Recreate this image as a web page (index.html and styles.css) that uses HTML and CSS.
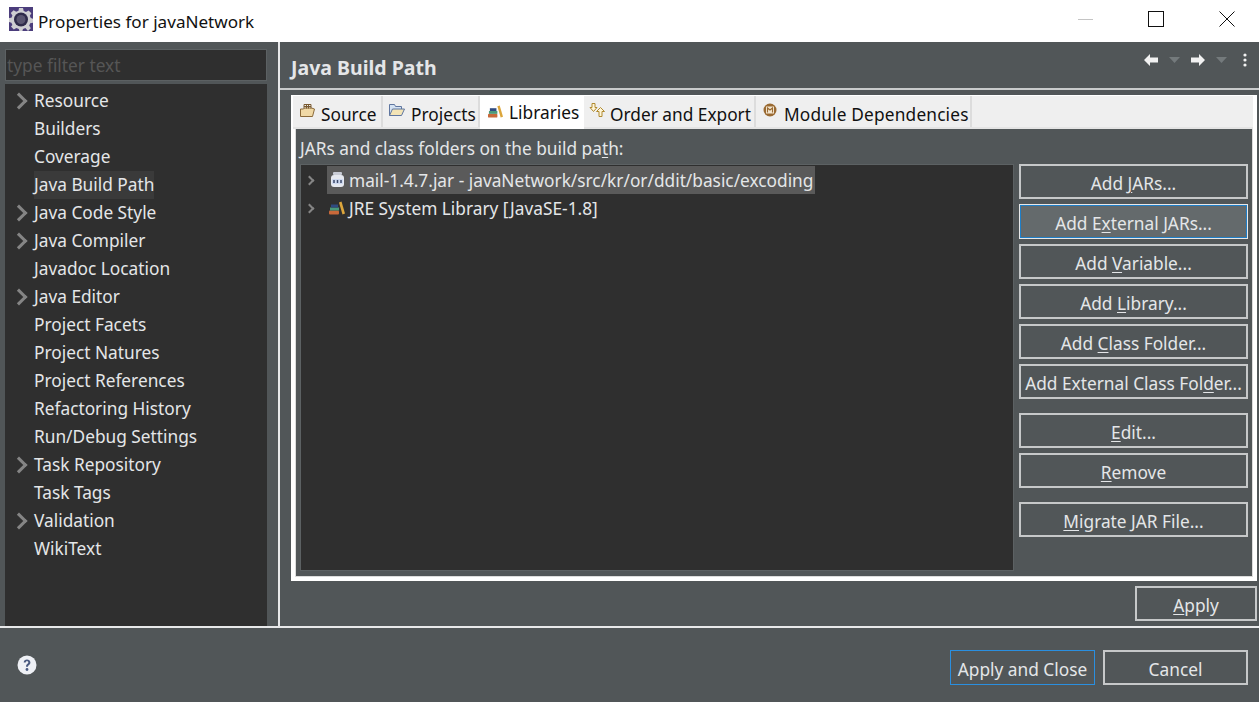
FILE: index.html
```html
<!DOCTYPE html>
<html lang="en">
<head>
  <meta charset="UTF-8">
  <title>Properties for javaNetwork</title>
  <link rel="stylesheet" href="styles.css">
</head>
<body>

<!-- title bar -->
<div class="titlebar">
  <svg class="app-icon" width="24" height="24" viewBox="0 0 24 24">
    <rect width="24" height="24" fill="#4b3d7c"/>
    <path d="M10 1h4l.7 3 2.300 1 2.600-1.600 2.800 2.800L20.800 8.800l1 2.200 2.200.7v4l-2.800.600-1 2.300 1.600 2.600-2.800 2.800L16.400 21l-2.400 1-.6 2h-3l-.6-2-2.400-1-2.600 1.400-2.800-2.800L3.400 18l-1-2.300L0 15.100v-4l2.400-.4 1-2.200L1.800 6 4.600 3.200 7.200 4.800l2.300-1z" fill="#cfcfd2"/>
    <circle cx="12" cy="12.500" r="7" fill="#2f2b4a"/>
    <circle cx="12" cy="12.500" r="4.500" fill="#5a5670"/>
  </svg>
  <span class="title-text">Properties for javaNetwork</span>
  <div class="win-buttons">
    <span class="win-min"></span>
    <span class="win-max"></span>
    <svg width="16" height="16" viewBox="0 0 16 16"><path d="M.5.500l15 15M15.500.500l-15 15" stroke="#111" fill="none"/></svg>
  </div>
</div>

<div class="main">
  <!-- left: filter + tree -->
  <div class="side">
    <input class="filter" type="text" placeholder="type filter text">
    <ul class="tree">
      <li class="has-kids">Resource</li>
      <li>Builders</li>
      <li>Coverage</li>
      <li class="current"><span>Java Build Path</span></li>
      <li class="has-kids">Java Code Style</li>
      <li class="has-kids">Java Compiler</li>
      <li>Javadoc Location</li>
      <li class="has-kids">Java Editor</li>
      <li>Project Facets</li>
      <li>Project Natures</li>
      <li>Project References</li>
      <li>Refactoring History</li>
      <li>Run/Debug Settings</li>
      <li class="has-kids">Task Repository</li>
      <li>Task Tags</li>
      <li class="has-kids">Validation</li>
      <li>WikiText</li>
    </ul>
  </div>

  <!-- right: page -->
  <div class="page">
    <div class="page-head">
      <h1>Java Build Path</h1>
      <div class="nav-icons">
        <svg width="14" height="12" viewBox="0 0 14 12"><path d="M0 6l6-6v3.500h8v5H6V12z" fill="#f2f2f2"/></svg>
        <svg class="nav-drop" width="11" height="6" viewBox="0 0 11 6"><path d="M0 0h11L5.500 6z" fill="#747a7c"/></svg>
        <svg width="14" height="12" viewBox="0 0 14 12"><path d="M14 6L8 0v3.500H0v5h8V12z" fill="#f2f2f2"/></svg>
        <svg class="nav-drop" width="11" height="6" viewBox="0 0 11 6"><path d="M0 0h11L5.500 6z" fill="#747a7c"/></svg>
        <svg class="nav-more" width="4" height="14" viewBox="0 0 4 14"><circle cx="2" cy="2" r="1.600" fill="#f2f2f2"/><circle cx="2" cy="7" r="1.600" fill="#f2f2f2"/><circle cx="2" cy="12" r="1.600" fill="#f2f2f2"/></svg>
      </div>
    </div>

    <div class="tabfolder">
      <div class="tabs">
        <div class="tab tab-source">
          <svg width="15" height="13" viewBox="0 0 15 13"><path d="M.5 12.500V5h3l1-1h7l3 1-2 7.500z" fill="#f0d9a6" stroke="#8a6a3a"/><path d="M4 4.500V.5h7v4M4 2.500h7M6.500.5v4M8.500.5v4" fill="none" stroke="#7a5a30"/></svg>
          Source
        </div>
        <div class="tab tab-projects">
          <svg width="16" height="12" viewBox="0 0 16 12"><path d="M.5 11.500V.5h5l1 2h6v3" fill="#d4e2f2" stroke="#5f76a0"/><path d="M.5 11.500l3-6.500h12l-3 6.500z" fill="#f3e4b6" stroke="#5f76a0"/></svg>
          Projects
        </div>
        <div class="tab tab-libraries selected">
          <svg width="15" height="13" viewBox="0 0 16 13"><use href="#books"/></svg>
          Libraries
        </div>
        <div class="tab tab-order">
          <svg width="17" height="14" viewBox="0 0 17 14"><path d="M3 .5h3v4h2L4.500 8.500 1 4.500h2z" fill="#fff6d8" stroke="#b08a30"/><path d="M10 13.500h3v-5h2.500L11.500 4.500 7.500 8.500H10z" fill="#fff6d8" stroke="#b08a30"/></svg>
          Order and Export
        </div>
        <div class="tab tab-module">
          <svg width="14" height="14" viewBox="0 0 14 14"><circle cx="7" cy="7" r="6.500" fill="#9a6a32"/><rect x="3" y="3.500" width="8" height="7" fill="#f4e6cf"/><path d="M4.500 9.500V5L7 7l2.500-2v4.500" stroke="#9a6a32" stroke-width="1.100" fill="none"/></svg>
          Module Dependencies
        </div>
      </div>

      <div class="tab-body">
        <div class="list-label">JARs and class folders on the build pa<u>t</u>h:</div>
        <div class="list-row">
          <div class="lib-tree">
            <div class="lib-item">
              <span class="twisty"></span>
              <span class="lib-name selected-lib">
                <svg width="16" height="16" viewBox="0 0 16 16"><rect x="4" y="0" width="9" height="3" rx="1" fill="#c9ccd6"/><rect x="2" y="3" width="13" height="12" rx="3" fill="#e6e9f0"/><rect x="3" y="7" width="11" height="5" fill="#cfdaf0"/><path d="M5 8v3M8.500 8v3M12 8v3" stroke="#3c4a6a" stroke-width="1.500"/></svg>
                mail-1.4.7.jar - javaNetwork/src/kr/or/ddit/basic/excoding
              </span>
            </div>
            <div class="lib-item">
              <span class="twisty"></span>
              <span class="lib-name">
                <svg width="16" height="14" viewBox="0 0 16 13"><use href="#books"/></svg>
                JRE System Library [JavaSE-1.8]
              </span>
            </div>
          </div>

          <div class="btn-col">
            <button class="btn">Add <u>J</u>ARs...</button>
            <button class="btn btn-focus">Add E<u>x</u>ternal JARs...</button>
            <button class="btn">Add <u>V</u>ariable...</button>
            <button class="btn">Add <u>L</u>ibrary...</button>
            <button class="btn">Add <u>C</u>lass Folder...</button>
            <button class="btn">Add External Class Fol<u>d</u>er...</button>
            <button class="btn btn-gap"><u>E</u>dit...</button>
            <button class="btn"><u>R</u>emove</button>
            <button class="btn btn-gap"><u>M</u>igrate JAR File...</button>
          </div>
        </div>
      </div>
    </div>

    <div class="apply-row">
      <button class="btn btn-apply"><u>A</u>pply</button>
    </div>
  </div>
</div>

<div class="footer">
  <svg class="help" width="20" height="20" viewBox="0 0 20 20">
    <circle cx="10" cy="10" r="9.500" fill="#eef0f5"/>
    <path d="M6.700 7.500c0-2 1.500-3 3.300-3s3.400 1 3.400 2.900c0 2.400-2.400 2.400-2.400 4.300H9c0-3 2.300-2.900 2.300-4.300 0-.7-.5-1.200-1.300-1.200s-1.300.5-1.300 1.300z" fill="#4a5a80"/>
    <circle cx="10" cy="14.500" r="1.400" fill="#4a5a80"/>
  </svg>
  <button class="btn btn-close">Apply and Close</button>
  <button class="btn btn-cancel">Cancel</button>
</div>

<!-- shared library icon -->
<svg class="defs" width="0" height="0">
  <defs>
    <g id="books">
      <rect x="0" y="9" width="10" height="4" rx="1" fill="#c8693a"/>
      <rect x="1" y="6" width="9" height="3" fill="#4a9a7a"/>
      <rect x="2" y="3" width="7" height="3" fill="#2f4a80"/>
      <path d="M10 1l2.500-1L16 12l-2.500 1z" fill="#dca63c"/>
    </g>
  </defs>
</svg>

</body>
</html>
```

FILE: styles.css
```css
* {
  box-sizing: border-box;
}
body {
  margin: 0;
  width: 1259px;
  height: 702px;
  overflow: hidden;
  display: flex;
  flex-direction: column;
  background: #515658;
  color: #e4e6e8;
  font-family: "Noto Sans", "Open Sans", sans-serif;
  font-size: 17.3px;
}
u {
  text-underline-offset: 2px;
  text-decoration-thickness: 1px;
}
.defs {
  position: absolute;
}

/* title bar */
.titlebar {
  height: 42px;
  background: #fff;
  color: #111;
  display: flex;
  align-items: center;
  padding-left: 9px;
  flex: none;
}
.app-icon {
  margin: -4px 5px 0 0;
}
.title-text {
  font-size: 17.1px;
}
.win-buttons {
  margin-left: auto;
  display: flex;
  align-items: center;
  gap: 55px;
  padding: 0 24px 4px 0;
}
.win-min {
  width: 15px;
  height: 1px;
  background: #c4c4c4;
}
.win-max {
  width: 16px;
  height: 16px;
  border: 1px solid #111;
}

.main {
  height: 586px;
  flex: none;
  display: flex;
  border-bottom: 2px solid #e8e9ea;
}

/* left side */
.side {
  width: 278px;
  padding: 7px 11px 0 5px;
  display: flex;
  flex-direction: column;
  gap: 3px;
  flex: none;
}
.filter {
  height: 32px;
  padding: 0 1px;
  background: #2f2f2f;
  border: 1px solid #5c6163;
  color: #e4e6e8;
  font: inherit;
  outline: none;
  flex: none;
}
.filter::placeholder {
  color: #565656;
  opacity: 1;
}
.tree {
  flex: 1;
  margin: 0;
  padding: 3px 0 0 29px;
  list-style: none;
  background: #2f2f2f;
}
.tree li {
  height: 28px;
  line-height: 28px;
  position: relative;
}
.tree .has-kids::before {
  content: "";
  position: absolute;
  left: -21px;
  top: 8px;
  width: 9px;
  height: 9px;
  border-top: 3px solid #858585;
  border-right: 3px solid #858585;
  transform: rotate(45deg);
}
.tree .current span {
  background: #3a3a3a;
  display: inline-block;
  height: 28px;
}

/* right side */
.page {
  flex: 1;
  min-width: 0;
  border-left: 2px solid #e8e9ea;
  display: flex;
  flex-direction: column;
}
.page-head {
  height: 48px;
  flex: none;
  border-bottom: 2px solid #c8cacb;
  display: flex;
  align-items: center;
  justify-content: space-between;
  padding: 4px 12px 0 11px;
}
.page-head h1 {
  margin: 0;
  font-size: 19.500px;
  font-weight: 700;
}
.nav-icons {
  display: flex;
  align-items: center;
  gap: 11px;
  margin-top: -14px;
}
.nav-more {
  margin-left: 5px;
}
.tabfolder {
  margin: 5px 2px 0 11px;
  height: 486px;
  background: #fff;
  padding: 1px 4px 4px 4px;
  flex: none;
  display: flex;
  flex-direction: column;
}
.tabs {
  display: flex;
  height: 33px;
  margin-left: -2px;
  background: #efefef;
  border-bottom: 2px solid #e4e4e4;
  flex: none;
  color: #111;
}
.tab {
  display: flex;
  align-items: center;
  gap: 6px;
  height: 31px;
  padding-top: 5px;
  border-right: 2px solid #dcdcdc;
  white-space: nowrap;
}
.tab svg {
  flex: none;
  margin-top: -8px;
}
.tab-source { width: 90px; padding-left: 7px; }
.tab-projects { width: 97px; padding-left: 6px; }
.tab-libraries { width: 104px; padding-left: 8px; }
.tab-order { width: 172px; padding-left: 5px; gap: 4px; }
.tab-module { width: 216px; padding-left: 7px; gap: 7px; letter-spacing: .17px; }
.tab.selected {
  background: #fff;
  height: 34px;
  border-right: 0;
  margin-top: -1px;
  padding-top: 1px;
}
.tab.selected svg {
  margin-top: -3px;
}
.tab-body {
  flex: 1;
  padding: 4px 4px 5px 4px;
  background: #515658;
  display: flex;
  flex-direction: column;
  min-height: 0;
  border: 1px solid #dcdcdc;
  border-top: 0;
}
.list-label {
  height: 31px;
  line-height: 32px;
  flex: none;
}
.list-row {
  flex: 1;
  display: flex;
  gap: 5px;
  min-height: 0;
}
.lib-tree {
  width: 714px;
  flex: none;
  background: #2f2f2f;
  border: 1px solid #5c6163;
  padding-top: 1px;
}
.lib-item {
  height: 28px;
  display: flex;
  align-items: center;
  padding-left: 5px;
}
.twisty {
  width: 7px;
  height: 7px;
  border-top: 2px solid #858585;
  border-right: 2px solid #858585;
  transform: rotate(45deg);
  margin-right: 14px;
  flex: none;
}
.lib-name {
  height: 28px;
  display: flex;
  align-items: center;
  gap: 4px;
  padding: 0 2px;
  white-space: nowrap;
}
.selected-lib {
  background: #5a5a5a;
}
.btn-col {
  width: 229px;
  flex: none;
  display: flex;
  flex-direction: column;
  gap: 6px;
}

/* buttons */
.btn {
  height: 35px;
  padding: 3px 0 0;
  background: #515658;
  color: #e4e6e8;
  border: 2px solid #c6c8c9;
  font: inherit;
  white-space: nowrap;
  flex: none;
}
.btn-focus {
  background: #646a6c;
  border: 1px solid #e8e8e8;
  box-shadow: inset 0 0 0 1px #1f7fc8;
}
.btn-col .btn {
  margin-bottom: -1px;
}
.btn-gap {
  margin-top: 9px;
}
.apply-row {
  display: flex;
  justify-content: flex-end;
  padding: 5px 2px 0 0;
}
.btn-apply {
  width: 122px;
}

/* footer */
.footer {
  flex: 1;
  display: flex;
  align-items: center;
  padding: 0 11px 0 17px;
}
.help {
  margin-right: auto;
}
.btn-close {
  width: 145px;
  margin: 5px 8px 0 0;
  border: 1px solid #2a8fe0;
}
.btn-cancel {
  width: 145px;
  margin-top: 5px;
}
```
